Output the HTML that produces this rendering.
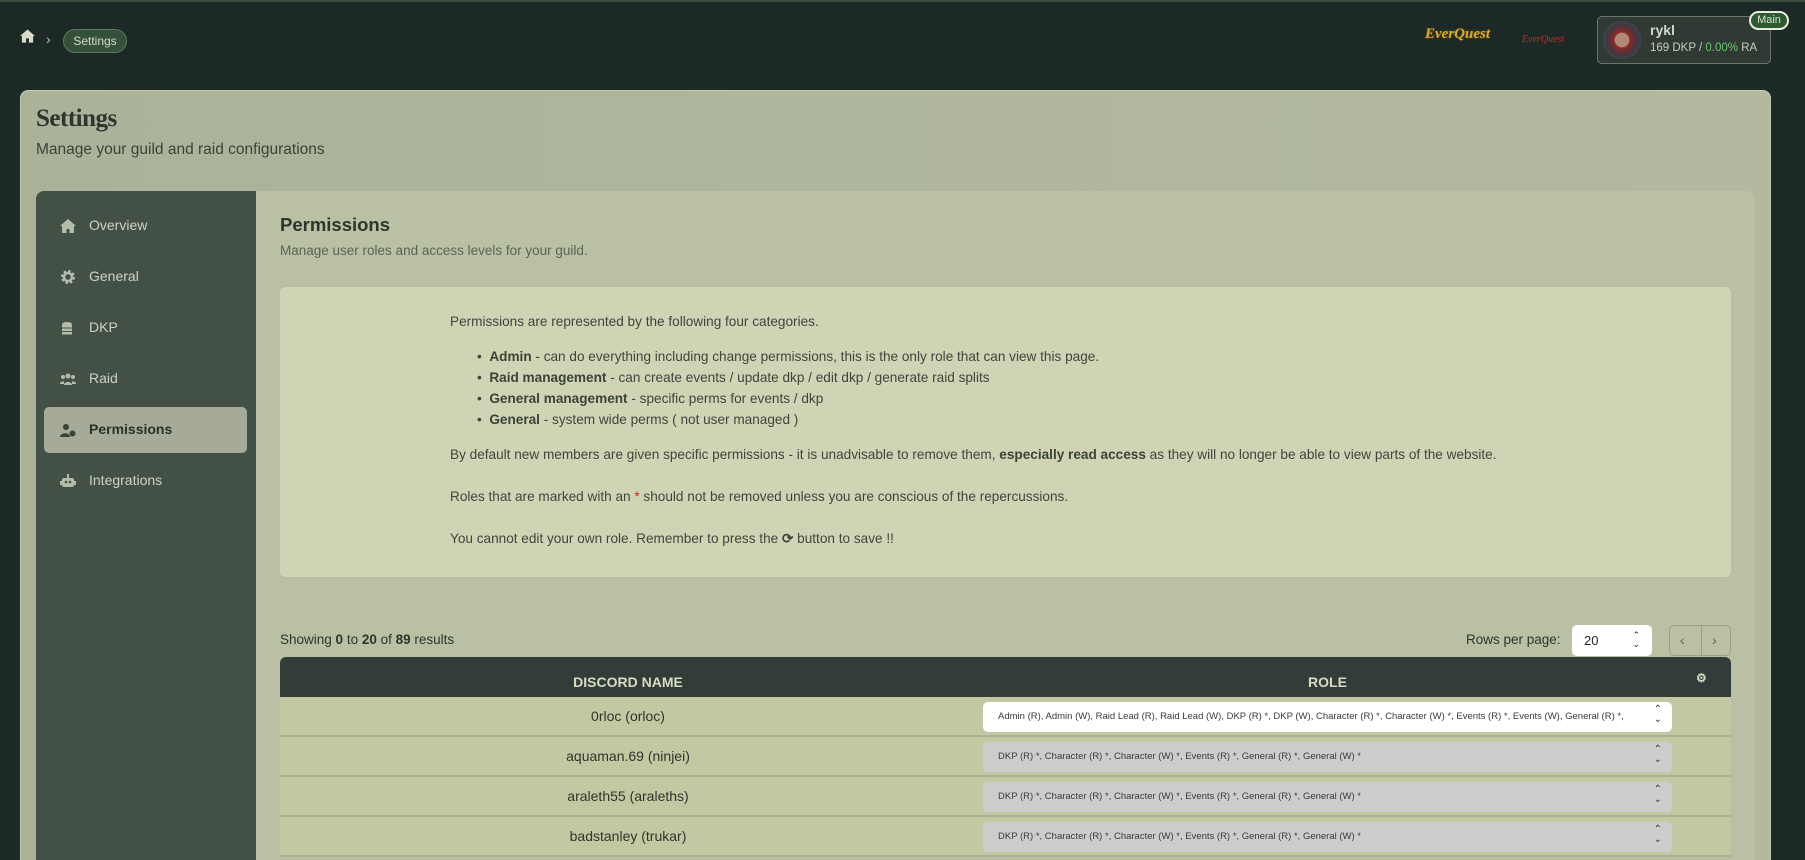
<!DOCTYPE html>
<html style="height:860px;overflow:hidden"><head><meta charset="utf-8"><style>
*{box-sizing:border-box;margin:0;padding:0}
body{width:1805px;height:860px;overflow:hidden;background:#1d2926;font-family:"Liberation Sans",sans-serif;position:relative;border-top:2px solid #3f4b41}
.abs{position:absolute}
.crumb{left:63px;top:27px;width:64px;height:24px;border:1px solid #5d7a5e;background:#34503a;border-radius:12px;color:#d6dcc9;font-size:12px;line-height:22px;text-align:center}
.card{left:20px;top:88px;width:1751px;height:780px;background:linear-gradient(90deg,#aab39a,#b3b99e);border-radius:8px;border:1px solid #c4c9b3}
.side{left:36px;top:189px;width:220px;height:680px;background:#435045;border-radius:8px 0 0 0}
.main{left:256px;top:189px;width:1499px;height:680px;background:#b9c0a4;border-radius:0 8px 0 0}
.nav{position:absolute;left:89px;color:#cdd3c3;font-size:14px}
.ico{position:absolute;left:60px;width:16px;height:16px}
.info{left:280px;top:285px;width:1451px;height:290px;background:#d0d4b5;border-radius:6px;color:#3d463c;font-size:13.6px}
.info p,.info li{position:absolute;white-space:nowrap}
.info b{color:#3a4337}
.row{position:absolute;left:280px;width:1451px;height:40px;background:#c3c8a3;border-bottom:2px solid #aab092}
.name{position:absolute;left:0;width:696px;text-align:center;top:11px;font-size:14px;color:#2d352c}
.sel{position:absolute;left:703px;top:5px;width:689px;height:30px;background:#cdcdcd;border-radius:5px;font-size:9.5px;color:#3a3a3a;line-height:30px;padding-left:15px;padding-right:30px;white-space:nowrap;overflow:hidden}
.sel.w{background:#fff}
.sel:after{content:"⌃\A⌄";white-space:pre;position:absolute;right:10px;top:-5px;line-height:10px;padding-top:8px;font-size:10px;background:inherit}
</style></head><body>
<svg class="abs" style="left:20px;top:27px" width="15" height="14" viewBox="0 0 16 14"><path d="M8 0L0 7h2v7h4.5V9.5h3V14H14V7h2z" fill="#d6dcc9"/></svg>
<div class="abs" style="left:46px;top:29px;color:#c0c6b6;font-size:14px">›</div>
<div class="abs crumb">Settings</div>
<div class="abs" style="left:1425px;top:24px;width:58px;height:22px;color:#d8a83a;font-family:'Liberation Serif',serif;font-weight:bold;font-style:italic;font-size:15px;text-shadow:0 0 2px #7a5a10">EverQuest</div>
<div class="abs" style="left:1522px;top:32px;width:42px;height:12px;color:#a83a2a;font-family:'Liberation Serif',serif;font-size:10px;font-style:italic">EverQuest</div>
<div class="abs" style="left:1597px;top:14px;width:174px;height:48px;background:#2f3a35;border:1px solid #69756d;border-radius:5px"></div>
<div class="abs" style="left:1603px;top:19px;width:38px;height:38px;border-radius:50%;background:radial-gradient(circle,#b08a78 25%,#8a2828 30%,#3a3a44 60%,#6a6a70 100%)"></div>
<div class="abs" style="left:1650px;top:20px;color:#d2d6c8;font-size:14px;font-weight:bold">rykl</div>
<div class="abs" style="left:1650px;top:40px;color:#c8ccc0;font-size:11.5px">169 DKP / <span style="color:#6fc36f">0.00%</span> RA</div>
<div class="abs" style="left:1749px;top:9px;width:40px;height:19px;background:#2d5a30;border:2px solid #e8ece0;border-radius:10px;color:#d8e0d0;font-size:11px;text-align:center;line-height:15px">Main</div>

<div class="abs card"></div>
<div class="abs" style="left:36px;top:103px;font-family:'Liberation Serif',serif;font-weight:bold;font-size:25px;color:#2d352c;letter-spacing:-0.5px">Settings</div>
<div class="abs" style="left:36px;top:139px;font-size:15.5px;color:#3a4236">Manage your guild and raid configurations</div>
<div class="abs side"></div>
<div class="abs main"></div>
<div class="abs" style="left:44px;top:405px;width:203px;height:46px;background:#a6ab99;border-radius:5px"></div>
<svg class="ico" style="top:216px" viewBox="0 0 16 16"><path d="M8 1L0 8h2v7h4.5v-4h3v4H14V8h2z" fill="#b5bcaa"/></svg>
<div class="nav" style="top:215px">Overview</div>
<svg class="ico" style="top:267px" viewBox="0 0 16 16"><circle cx="8" cy="8" r="5.5" fill="none" stroke="#b5bcaa" stroke-width="3" stroke-dasharray="2.5 1.8"/><circle cx="8" cy="8" r="4" fill="none" stroke="#b5bcaa" stroke-width="2.5"/></svg>
<div class="nav" style="top:266px">General</div>
<svg class="ico" style="top:318px" viewBox="0 0 16 16"><g fill="#b5bcaa"><ellipse cx="7" cy="4" rx="5" ry="2"/><rect x="2" y="5" width="10" height="2.5"/><rect x="2" y="8.5" width="10" height="2.5"/><rect x="2" y="12" width="10" height="2.5"/></g></svg>
<div class="nav" style="top:317px">DKP</div>
<svg class="ico" style="top:369px" viewBox="0 0 16 16"><g fill="#b5bcaa"><circle cx="8" cy="5" r="2.5"/><circle cx="3" cy="6" r="2"/><circle cx="13" cy="6" r="2"/><path d="M4 14c0-4 8-4 8 0zM0 13c0-3 4-3 4-2v2zM16 13c0-3-4-3-4-2v2z"/></g></svg>
<div class="nav" style="top:368px">Raid</div>
<svg class="ico" style="top:420px" viewBox="0 0 16 16"><g fill="#3a4436"><circle cx="6" cy="5" r="3"/><path d="M0 15c0-5 10-5 10 0z"/><circle cx="12.5" cy="11.5" r="3"/></g></svg>
<div class="nav" style="top:419px;color:#2a3228;font-weight:bold">Permissions</div>
<svg class="ico" style="top:471px" viewBox="0 0 16 16"><g fill="#b5bcaa"><rect x="2" y="5" width="12" height="9" rx="2"/><rect x="7" y="1" width="2" height="4"/><rect x="0" y="8" width="2" height="4"/><rect x="14" y="8" width="2" height="4"/></g><circle cx="6" cy="9" r="1.3" fill="#435045"/><circle cx="10" cy="9" r="1.3" fill="#435045"/></svg>
<div class="nav" style="top:470px">Integrations</div>

<div class="abs" style="left:280px;top:212px;font-size:18.5px;font-weight:bold;color:#2d352c">Permissions</div>
<div class="abs" style="left:280px;top:241px;font-size:13.5px;color:#5a6357">Manage user roles and access levels for your guild.</div>

<div class="abs info">
<p style="left:170px;top:27px">Permissions are represented by the following four categories.</p>
<ul style="list-style:none">
<li style="left:197px;top:62px">•&nbsp;&nbsp;<b>Admin</b> - can do everything including change permissions, this is the only role that can view this page.</li>
<li style="left:197px;top:83px">•&nbsp;&nbsp;<b>Raid management</b> - can create events / update dkp / edit dkp / generate raid splits</li>
<li style="left:197px;top:104px">•&nbsp;&nbsp;<b>General management</b> - specific perms for events / dkp</li>
<li style="left:197px;top:125px">•&nbsp;&nbsp;<b>General</b> - system wide perms ( not user managed )</li>
</ul>
<p style="left:170px;top:160px">By default new members are given specific permissions - it is unadvisable to remove them, <b>especially read access</b> as they will no longer be able to view parts of the website.</p>
<p style="left:170px;top:202px">Roles that are marked with an <span style="color:#d02020">*</span> should not be removed unless you are conscious of the repercussions.</p>
<p style="left:170px;top:244px">You cannot edit your own role. Remember to press the <b>⟳</b> button to save !!</p>
</div>

<div class="abs" style="left:280px;top:630px;font-size:13.5px;color:#2d352c">Showing <b>0</b> to <b>20</b> of <b>89</b> results</div>
<div class="abs" style="left:1466px;top:630px;font-size:13.5px;color:#2d352c">Rows per page:</div>
<div class="abs" style="left:1572px;top:623px;width:80px;height:31px;background:#fff;border-radius:5px;font-size:13px;line-height:31px;padding-left:12px;color:#222">20<span style="position:absolute;right:12px;top:-4px;font-size:9px;line-height:9px;padding-top:10px">⌃<br>⌄</span></div>
<div class="abs" style="left:1669px;top:623px;width:62px;height:31px;border:1px solid #9aa088;border-radius:5px;color:#5a6357;font-size:14px;line-height:29px"><span style="position:absolute;left:10px">‹</span><span style="position:absolute;left:31px;top:0;height:29px;border-left:1px solid #9aa088"></span><span style="position:absolute;left:42px">›</span></div>

<div class="abs" style="left:280px;top:655px;width:1451px;height:40px;background:#323d39;border-radius:6px 6px 0 0;color:#d8dcc0;font-weight:bold;font-size:14px">
<span style="position:absolute;left:0;width:696px;text-align:center;top:17px">DISCORD NAME</span>
<span style="position:absolute;left:703px;width:689px;text-align:center;top:17px">ROLE</span>
<span style="position:absolute;left:1416px;top:14px;font-size:12px">⚙</span>
</div>
<div class="row" style="top:695px"><div class="name">0rloc (orloc)</div><div class="sel w">Admin (R), Admin (W), Raid Lead (R), Raid Lead (W), DKP (R) *, DKP (W), Character (R) *, Character (W) *, Events (R) *, Events (W), General (R) *,</div></div>
<div class="row" style="top:735px"><div class="name">aquaman.69 (ninjei)</div><div class="sel">DKP (R) *, Character (R) *, Character (W) *, Events (R) *, General (R) *, General (W) *</div></div>
<div class="row" style="top:775px"><div class="name">araleth55 (araleths)</div><div class="sel">DKP (R) *, Character (R) *, Character (W) *, Events (R) *, General (R) *, General (W) *</div></div>
<div class="row" style="top:815px"><div class="name">badstanley (trukar)</div><div class="sel">DKP (R) *, Character (R) *, Character (W) *, Events (R) *, General (R) *, General (W) *</div></div>
</body></html>
